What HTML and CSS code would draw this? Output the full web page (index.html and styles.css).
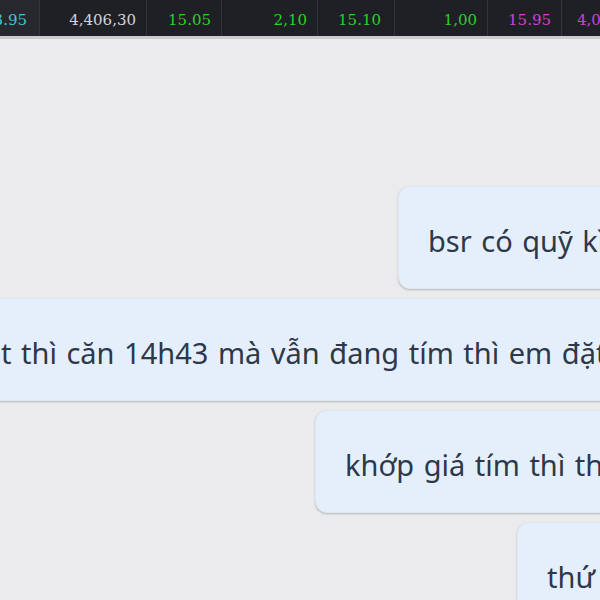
FILE: index.html
```html
<!DOCTYPE html>
<html lang="vi">
<head>
    <meta charset="UTF-8">
    <title>Chat</title>
    <meta name="viewport" content="width=device-width, initial-scale=1">
    <link rel="stylesheet" href="styles.css">
</head>
<body>
    <div class="ticker">
        <div class="cell w1 cyan">13.95</div>
        <div class="cell w2 gray">4,406,30</div>
        <div class="cell w3 green">15.05</div>
        <div class="cell w4 green">2,10</div>
        <div class="cell w5 green">15.10</div>
        <div class="cell w6 green">1,00</div>
        <div class="cell w7 purple">15.95</div>
        <div class="cell w8 purple left">4,00</div>
    </div>

    <div class="chat">
        <div class="bubble msg-1">bsr có quỹ kìa anh ơi</div>
        <div class="bubble msg-2">mua đặt thì căn 14h43 mà vẫn đang tím thì em đặt lệnh</div>
        <div class="bubble msg-3">khớp giá tím thì thôi anh</div>
        <div class="bubble msg-4">thứ hai em xem</div>
    </div>
</body>
</html>
```

FILE: styles.css
```css
html, body {
    margin: 0;
    padding: 0;
    height: 100%;
    overflow: hidden;
}

body {
    background: #ebebed;
    font-family: "Noto Sans", "Open Sans", sans-serif;
}

.ticker {
    display: flex;
    height: 36px;
    background: #1f2025;
    border-bottom: 3px solid #cbcbce;
    font-family: "DejaVu Serif", serif;
    font-size: 15px;
    overflow: hidden;
}

.cell {
    display: flex;
    align-items: center;
    justify-content: flex-end;
    flex-shrink: 0;
    padding: 3px 10px 0 0;
    box-sizing: border-box;
    border-right: 1px solid #34353b;
    white-space: nowrap;
    overflow: hidden;
}

.cell.left {
    justify-content: flex-start;
    padding-left: 15px;
}

.w1 { width: 40px; background: #27282d; padding-right: 12px; }
.w2 { width: 107px; }
.w3 { width: 75px; }
.w4 { width: 96px; }
.w5 { width: 77px; padding-right: 13px; }
.w6 { width: 93px; }
.w7 { width: 74px; }
.w8 { width: 80px; border-right: none; }

.cyan { color: #3ec6d3; }
.gray { color: #d4d4d6; }
.green { color: #2ad125; }
.purple { color: #d23fd4; }

.chat {
    display: flex;
    flex-direction: column;
    align-items: flex-start;
    gap: 9px;
    padding-top: 147px;
}

.bubble {
    flex-shrink: 0;
    min-width: 640px;
    padding: 37px 29px 30px;
    line-height: 34px;
    font-size: 29px;
    word-spacing: 2px;
    color: #2e3848;
    background: #e5effb;
    border: 1px solid #dde6f1;
    border-radius: 12px;
    box-shadow: 0 1px 2px rgba(0, 0, 0, 0.22);
    white-space: nowrap;
    box-sizing: border-box;
}

.msg-1 { margin-left: 398px; }
.msg-2 { margin-left: -134px; }
.msg-3 { margin-left: 315px; }
.msg-4 { margin-left: 517px; }
```
